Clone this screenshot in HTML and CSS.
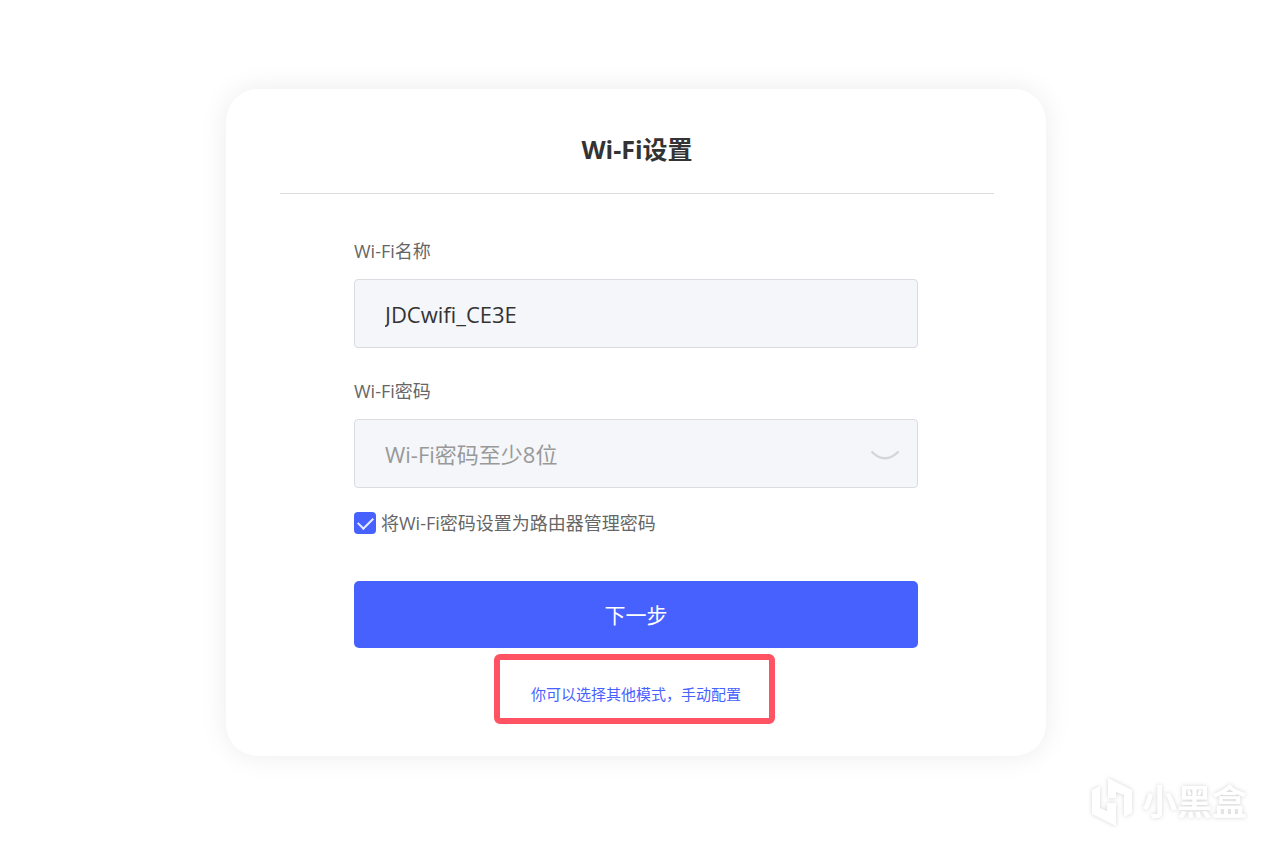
FILE: index.html
```html
<!DOCTYPE html>
<html lang="zh-CN">
<head>
<meta charset="utf-8">
<meta name="viewport" content="width=device-width, initial-scale=1">
<title>Wi-Fi设置</title>
<link rel="stylesheet" href="styles.css">
</head>
<body>
<main class="page">
  <section class="card">
    <h1 class="card-title">Wi-Fi设置</h1>
    <form class="form">
      <label class="label" for="ssid">Wi-Fi名称</label>
      <input class="input" id="ssid" type="text" value="JDCwifi_CE3E">
      <label class="label" for="password">Wi-Fi密码</label>
      <div class="password">
        <input class="input" id="password" type="password" placeholder="Wi-Fi密码至少8位">
        <button class="toggle" type="button" aria-label="显示密码">
          <svg width="30" height="14" viewBox="0 0 30 14" fill="none" stroke="#d3d5d9" stroke-width="2.4"><path d="M1.500 3.500Q5 7 8 8.500Q15 12 22 8.500Q25 7 28.500 3.500"/></svg>
        </button>
      </div>
      <label class="check" for="same">
        <input class="checkbox" id="same" type="checkbox" checked>
        <span>将Wi-Fi密码设置为路由器管理密码</span>
      </label>
      <button class="submit" type="button">下一步</button>
      <a class="manual" href="#">你可以选择其他模式，手动配置<span class="marker"></span></a>
    </form>
  </section>
</main>
<div class="watermark">
  <svg width="44" height="52" viewBox="0 0 44 52" fill="#fff"><path d="M2 14L10 10V32L17 35V27H26V50L2 38Z"/><path d="M18 2L42 14V37L34 41V19L26 16V22H18Z"/></svg>
  <span>小黑盒</span>
</div>
</body>
</html>
```
FILE: styles.css
```css
* {
  box-sizing: border-box;
}

body {
  margin: 0;
  min-height: 100vh;
  background: #fff;
  color: #666;
  font-family: "Open Sans", "Noto Sans CJK SC", sans-serif;
  font-size: 18px;
  line-height: 24px;
}

.page {
  padding: 89px 20px 89px 9px;
}

.card {
  max-width: 820px;
  margin: 0 auto;
  padding: 40px 52px 50px 54px;
  border-radius: 32px;
  background: #fff;
  box-shadow: 0 0 28px rgba(0, 0, 0, 0.08);
}

.card-title {
  margin: 0;
  padding-bottom: 24px;
  border-bottom: 1px solid #dcdcdc;
  color: #333;
  font-size: 25px;
  font-weight: 700;
  line-height: 40px;
  text-align: center;
}

.form {
  display: flex;
  flex-direction: column;
  max-width: 566px;
  margin: 0 auto;
  padding: 45px 2px 0 0;
}

.label {
  margin-bottom: 16px;
}

.input {
  width: 100%;
  height: 69px;
  margin-bottom: 31px;
  padding: 0 30px;
  border: 1px solid #d9dce1;
  border-radius: 4px;
  background: #f4f6f9;
  color: #333;
  font: inherit;
  font-size: 22px;
}

.input::placeholder {
  color: #999;
  opacity: 1;
}

.password {
  position: relative;
}

.password .input {
  display: block;
  margin-bottom: 23px;
  padding-right: 60px;
}

.toggle {
  position: absolute;
  top: 29px;
  right: 18px;
  display: flex;
  padding: 0;
  border: 0;
  background: none;
}

.check {
  display: flex;
  align-items: center;
  gap: 5px;
}

.checkbox {
  appearance: none;
  width: 22px;
  height: 22px;
  margin: 0;
  border-radius: 4px;
  background: #4761ff;
  display: grid;
  place-items: center;
}

.checkbox:checked::before {
  content: "";
  width: 13px;
  height: 7px;
  margin-bottom: 4px;
  border: solid #e8ebff;
  border-width: 0 0 2px 2px;
  transform: rotate(-45deg);
}

.submit {
  height: 67px;
  margin-top: 46px;
  border: 0;
  border-radius: 5px;
  background: #4761ff;
  color: #fff;
  font: inherit;
  font-size: 21px;
}

.manual {
  position: relative;
  align-self: center;
  margin-top: 34px;
  color: #4761ff;
  font-size: 15px;
  text-decoration: none;
}

.marker {
  position: absolute;
  inset: -28px -34px -18px -37px;
  border: 6px solid #ff5262;
  border-radius: 6px;
  pointer-events: none;
}

.watermark {
  position: fixed;
  right: 36px;
  bottom: 20px;
  display: flex;
  align-items: center;
  gap: 8px;
  color: #fff;
  font-size: 35px;
  font-weight: 700;
  line-height: 52px;
  filter: drop-shadow(0 0 2px rgba(0, 0, 0, 0.17));
}
```
